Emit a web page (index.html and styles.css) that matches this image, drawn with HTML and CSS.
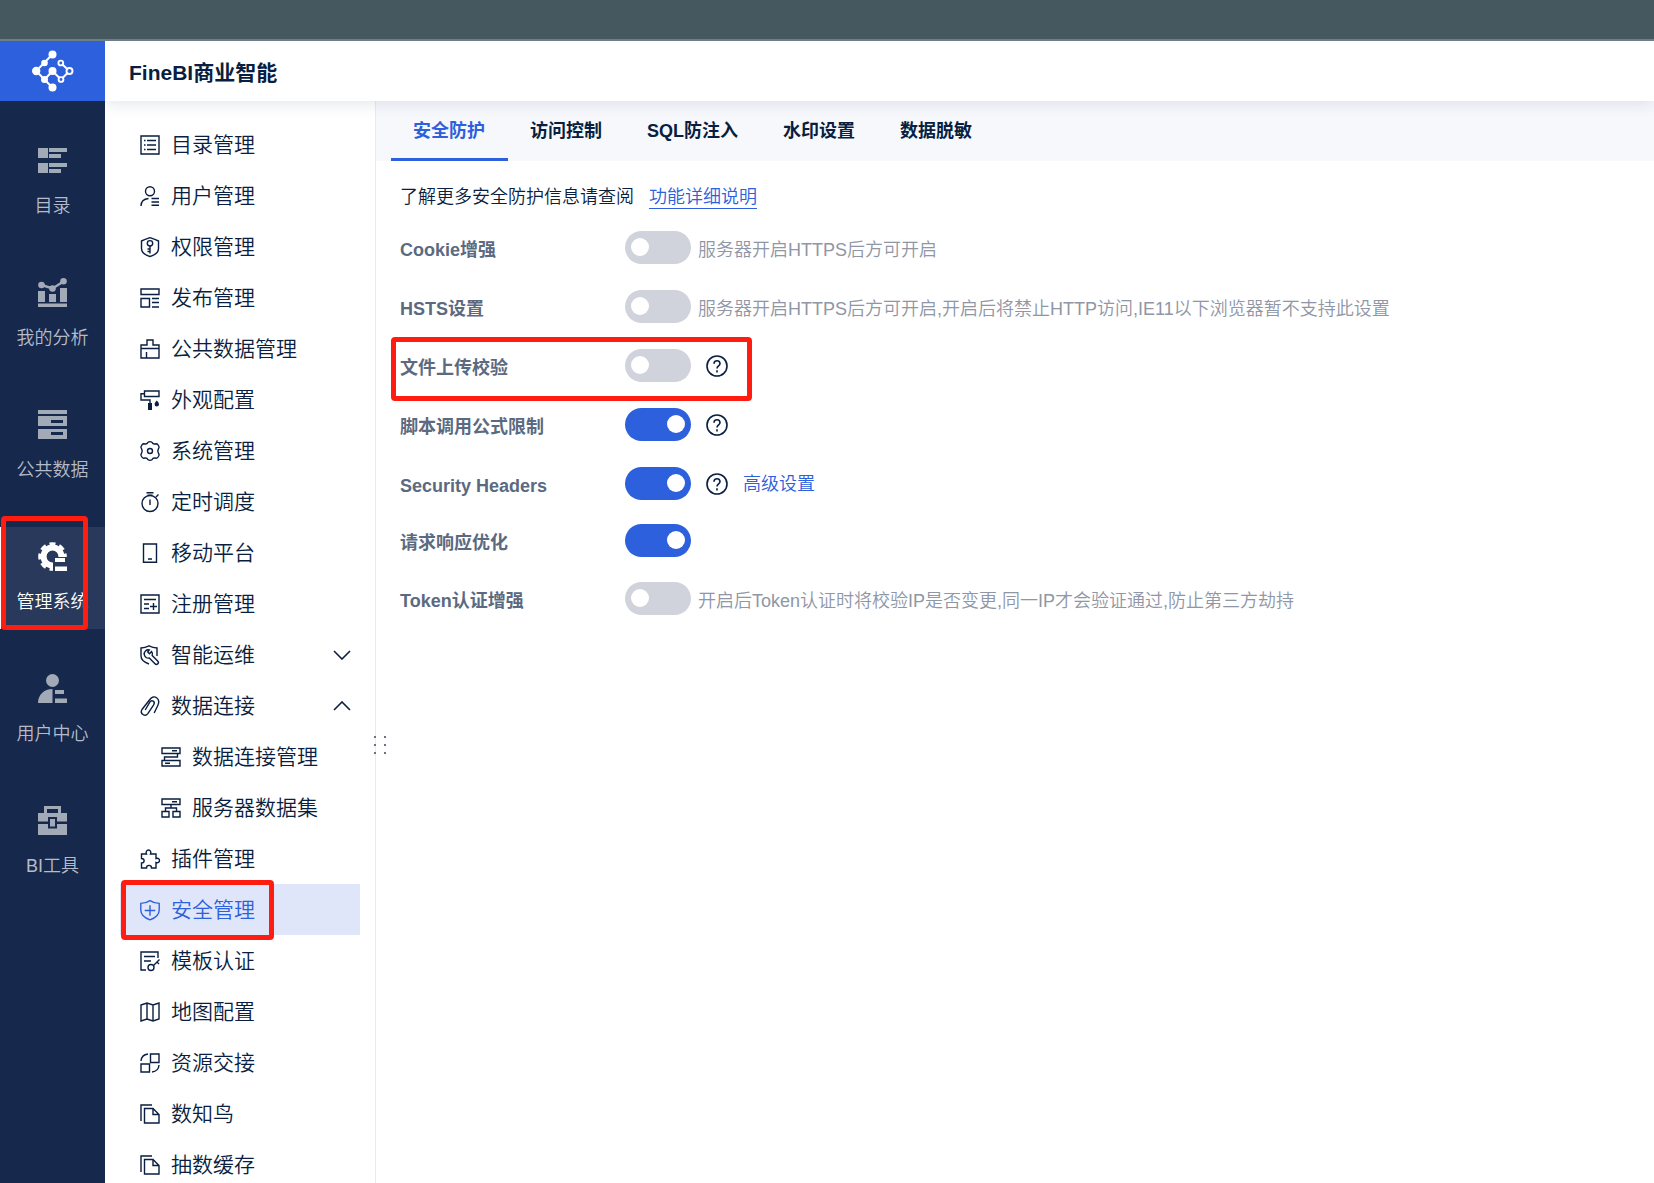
FILE: index.html
```html
<!DOCTYPE html>
<html lang="zh-CN">
<head>
<meta charset="utf-8">
<meta name="viewport" content="width=device-width, initial-scale=1">
<title>FineBI商业智能</title>
<link rel="stylesheet" href="styles.css">
</head>
<body>
<div class="window-bar"></div>
<div class="app">
  <div class="rail">
    <a class="logo" href="#" aria-label="FineBI">
      <svg width="42" height="42" viewBox="0 0 42 42">
        <path d="M20.500 4.300 4.200 21l16.300 16.700M12.500 29.500l8-8.500 8.500 8.500 8.500-8.500-8.700-8" fill="none" stroke="#fff" stroke-width="2"/>
        <g fill="#fff"><circle cx="20.500" cy="4.500" r="4"/><circle cx="12.500" cy="13" r="3.300"/><circle cx="4.200" cy="21" r="4.200"/><circle cx="12.500" cy="29.500" r="3.500"/><circle cx="20.500" cy="21" r="4"/><circle cx="20.500" cy="37.500" r="4"/></g>
        <g fill="#2c60dc" stroke="#fff" stroke-width="1.900"><circle cx="28.800" cy="13" r="2.400"/><circle cx="37.500" cy="21" r="3"/><circle cx="29" cy="29.500" r="2.400"/></g>
      </svg>
    </a>
    <nav class="rail-nav" aria-label="主导航">
      <a class="rail-item" href="#">
        <svg class="rail-icon" viewBox="0 0 29 29"><path d="M0 2h10v10H0zM11 2h18v4H11zM11 8h12v4H11zM0 17h10v10H0zM11 17h18v4H11zM11 23h12v4H11z"/></svg>
        <span>目录</span>
      </a>
      <a class="rail-item" href="#">
        <svg class="rail-icon" viewBox="0 0 29 29"><path d="M0 13h7v11H0zM11 16h7v8h-7zM22 10h7v14h-7zM0 25.500h29V29H0z"/><circle cx="3.500" cy="7" r="3.300"/><circle cx="14.500" cy="10.500" r="3.300"/><circle cx="25.500" cy="3.300" r="3.300"/><path d="m3.500 7 11 3.500 11-7" fill="none" stroke="currentColor" stroke-width="2.400"/></svg>
        <span>我的分析</span>
      </a>
      <a class="rail-item" href="#">
        <svg class="rail-icon" viewBox="0 0 29 29"><path fill-rule="evenodd" d="M0 0h29v4H0zM0 6h29v10H0zM13 10v3h12v-3zM0 19h29v10H0zM13 22v3h12v-3z"/></svg>
        <span>公共数据</span>
      </a>
      <a class="rail-item is-active" href="#" aria-current="page">
        <svg class="rail-icon" viewBox="0 0 29 29">
          <clipPath id="gear-cut"><path d="M0 0h29v15H15v14H0z"/></clipPath>
          <g clip-path="url(#gear-cut)" fill="none" stroke="currentColor"><circle cx="14.500" cy="14.500" r="8.900" stroke-width="6"/><circle cx="14.500" cy="14.500" r="12.600" stroke-width="3.400" pathLength="80" stroke-dasharray="6 4" stroke-dashoffset="3"/></g>
          <path d="M17 16h10v4H17zM17 24.500h12V29H17z"/>
        </svg>
        <span>管理系统</span>
        <i class="marker marker-rail"></i>
      </a>
      <a class="rail-item" href="#">
        <svg class="rail-icon" viewBox="0 0 29 29"><circle cx="14.500" cy="6.500" r="6.500"/><path d="M14.500 15v14H0c0-8 6-14 14.500-14zM17 16h9v4h-9zM17 24.500h12V29H17z"/></svg>
        <span>用户中心</span>
      </a>
      <a class="rail-item" href="#">
        <svg class="rail-icon" viewBox="0 0 29 29"><path fill-rule="evenodd" d="M6 0h17v7h6v8.500H19V11h-9v4.500H0V7h6zM9 3v4h11V3zM0 18h10v4.500h9V18h10v11H0zM12 13h5v7.500h-5z"/></svg>
        <span>BI工具</span>
      </a>
    </nav>
  </div>

  <div class="workspace">
    <header class="header"><h1 class="title">FineBI商业智能</h1></header>
    <div class="body">
      <div class="sidebar">
        <nav class="menu" aria-label="管理系统">
          <a class="menu-item" href="#"><svg class="icon" viewBox="0 0 20 20"><path d="M1 1h18v18H1zM7 5.500h9M7 10h9M7 14.500h9M4 5.500h1.500M4 10h1.500M4 14.500h1.500"/></svg>目录管理</a>
          <a class="menu-item" href="#"><svg class="icon" viewBox="0 0 20 20"><circle cx="10" cy="5.300" r="4.500"/><path d="M1 20c0-4 2.800-7 7.500-7.500M11.500 12.500H19M11.500 16H19M11.500 19.300H19"/></svg>用户管理</a>
          <a class="menu-item" href="#"><svg class="icon" viewBox="0 0 20 20"><path d="M10 .700c3 1 5.800 2 8.500 3.300v7.500c0 4-3.500 6.500-8.500 8-5-1.500-8.500-4-8.500-8V4C4.200 2.700 7 1.700 10 .700zM10 9v7.500M10 12H7.500M10 14.500H7.500"/><circle cx="10" cy="6.300" r="2.700"/></svg>权限管理</a>
          <a class="menu-item" href="#"><svg class="icon" viewBox="0 0 20 20"><path d="M1 1h18v5.500H1zM1 10.500h8.500V19H1zM12 10.500h7M12 14.500h7M12 19h7"/></svg>发布管理</a>
          <a class="menu-item" href="#"><svg class="icon" viewBox="0 0 20 20"><path d="M1 6h6V1h6v5h6v13H1zM1 9.500h18M6.500 13v6"/></svg>公共数据管理</a>
          <a class="menu-item" href="#"><svg class="icon" viewBox="0 0 20 20"><path d="M4.500 1H19v5.500H4.500zM4.500 3.700H1V10h9v3"/><path class="solid" d="M8 13h4v7H8zM16.800 10.500c1.300 1.500 2.200 2.600 2.200 3.700a2.200 2.200 0 0 1-4.400 0c0-1.100.9-2.200 2.200-3.700z"/></svg>外观配置</a>
          <a class="menu-item" href="#"><svg class="icon" viewBox="0 0 20 20"><path d="M7.800 1.500Q10-.200 12.200 1.500q.6 1.700 2.600 1.500l1.700-.2q1 .1 1.600 1.200l.9 1.800q.3 1-.6 2-1.300 2.200 0 4.400.9 1 .6 2l-.9 1.800q-.6 1.100-1.600 1.200l-1.700-.2q-2-.2-2.600 1.500-2.200 1.700-4.400 0-.6-1.700-2.600-1.500l-1.700.2q-1-.1-1.600-1.200L1 14.200q-.3-1 .6-2 1.300-2.200 0-4.400-.9-1-.6-2L1.900 4q.6-1.100 1.600-1.200l1.700.2q2 .2 2.600-1.500z"/><circle cx="10" cy="10" r="2.500"/></svg>系统管理</a>
          <a class="menu-item" href="#"><svg class="icon" viewBox="0 0 20 20"><circle cx="10" cy="11.500" r="8"/><path d="M6.500.800h7M7.500 3.300h5M10 7.500V13M16 5l2.500-2.500"/></svg>定时调度</a>
          <a class="menu-item" href="#"><svg class="icon" viewBox="0 0 20 20"><path d="M3.500 1h13v18.200h-13zM8 16h4"/></svg>移动平台</a>
          <a class="menu-item" href="#"><svg class="icon" viewBox="0 0 20 20"><path d="M1 1h18v18H1zM4 5.500h12M4 10h5M4 14.500h5M10 12.500h7M13.500 9v7"/></svg>注册管理</a>
          <a class="menu-item" href="#"><svg class="icon" viewBox="0 0 20 20"><path d="M9 19c-5-1.800-8-4-8-8V3C3.500 2.800 6.500 2 9 .800c2.500 1.200 5.500 2 8 2.200v8"/><path d="M9.300 5a4 4 0 0 0-5 4.700 4 4 0 0 0 5 3.300l5.700 5.700a1.700 1.700 0 0 0 2.900-2.500l-5.700-5.700a4 4 0 0 0-.7-4L9.500 8.800 7.700 7z"/></svg>智能运维<svg class="chevron" viewBox="0 0 18 10"><path d="m1 1 8 8 8-8"/></svg></a>
          <a class="menu-item" href="#"><svg class="icon" viewBox="0 0 20 20"><path d="m14.200 17 3.600-7.500C21 3 14-2.500 9.800 3.500L2 13.500C-.500 17.500 5 21.500 8 17.300l5.800-8.600c1.700-3-2-5.500-4-2.500L5.200 14"/></svg>数据连接<svg class="chevron" viewBox="0 0 18 10"><path d="m1 9 8-8 8 8"/></svg></a>
          <a class="menu-item is-nested" href="#"><svg class="icon" viewBox="0 0 20 20"><path d="M1 1h18v5.500H1zM1 13.500h18V19H1zM16.500 6.500V10h-13v3.500M11 3.800h5M4 16.300h5"/></svg>数据连接管理</a>
          <a class="menu-item is-nested" href="#"><svg class="icon" viewBox="0 0 20 20"><path d="M1 1h18v5.500H1zM1 13.500h7V19H1zM12 13.500h7V19h-7zM4.500 13.500V10h11v3.500M10 6.500V10M11 3.800h5"/></svg>服务器数据集</a>
          <a class="menu-item" href="#"><svg class="icon" viewBox="0 0 20 20"><path d="M1.500 5h5c-1-2 .2-4 2-4s3 2 2 4H16v4.500c2-.8 3.500.4 3.500 2s-1.500 2.800-3.500 2V19h-4.500c0-3.500-5-3.500-5 0h-5v-5c3.500 0 3.500-4.500 0-4.500z"/></svg>插件管理</a>
          <a class="menu-item is-active" href="#" aria-current="page"><svg class="icon" viewBox="0 0 20 20"><path d="M10 .700c3 2 6 2.700 9.200 2.700V10c0 5-4 8-9.200 9.800C4.800 18 .800 15 .800 10V3.400C4 3.400 7 2.700 10 .700zM4.700 10.500h10.600M10 5.200v10.600"/></svg>安全管理<i class="marker marker-menu"></i></a>
          <a class="menu-item" href="#"><svg class="icon" viewBox="0 0 20 20"><path d="M6 19H1V1h17v6M4 5.500h11M4 10h7M13.500 14.500 19.500 8.500M17 11l2 2"/><circle cx="11" cy="16.500" r="3"/></svg>模板认证</a>
          <a class="menu-item" href="#"><svg class="icon" viewBox="0 0 20 20"><path d="m1 3 6-2 6 2 6-2v16l-6 2-6-2-6 2zM7 1v16M13 3v16"/></svg>地图配置</a>
          <a class="menu-item" href="#"><svg class="icon" viewBox="0 0 20 20"><path d="M10.500 1H19v8.500h-8.500zM1 11h8.500v8H1zM1 8c.3-4 2.500-6.500 7-7M19 12c-.3 4-2.500 6.500-7 7"/></svg>资源交接</a>
          <a class="menu-item" href="#"><svg class="icon" viewBox="0 0 20 20"><path d="M1 17V1h11M4.500 4.500H13l6 6V19H4.500zM13 4.500v6h6"/></svg>数知鸟</a>
          <a class="menu-item" href="#"><svg class="icon" viewBox="0 0 20 20"><path d="M1 17V1h11M4.500 4.500H13l6 6V19H4.500zM13 4.500v6h6"/></svg>抽数缓存</a>
        </nav>
        <svg class="grip" width="12" height="18" viewBox="0 0 12 18"><path d="M0 0h2v2H0zM10 0h2v2h-2zM0 8h2v2H0zM10 8h2v2h-2zM0 16h2v2H0zM10 16h2v2h-2z"/></svg>
      </div>

      <main class="main">
        <div class="tabs" role="tablist">
          <button class="tab is-active" type="button" role="tab" aria-selected="true">安全防护</button>
          <button class="tab" type="button" role="tab">访问控制</button>
          <button class="tab" type="button" role="tab">SQL防注入</button>
          <button class="tab" type="button" role="tab">水印设置</button>
          <button class="tab" type="button" role="tab">数据脱敏</button>
        </div>
        <div class="panel">
          <p class="intro">了解更多安全防护信息请查阅<a class="doc-link" href="#">功能详细说明</a></p>
          <div class="settings">
            <div class="setting">
              <label class="name" for="cookie">Cookie增强</label>
              <input class="switch" id="cookie" type="checkbox" role="switch">
              <span class="note">服务器开启HTTPS后方可开启</span>
            </div>
            <div class="setting">
              <label class="name" for="hsts">HSTS设置</label>
              <input class="switch" id="hsts" type="checkbox" role="switch">
              <span class="note">服务器开启HTTPS后方可开启,开启后将禁止HTTP访问,IE11以下浏览器暂不支持此设置</span>
            </div>
            <div class="setting">
              <label class="name" for="upload">文件上传校验</label>
              <input class="switch" id="upload" type="checkbox" role="switch">
              <button class="help" type="button" aria-label="帮助"><svg width="22" height="22" viewBox="0 0 22 22"><circle cx="11" cy="11" r="10"/><path d="M8 8.800c0-4 6-4 6 0 0 2-3 2.200-3 4.700M11 15.200v2.200"/></svg></button>
              <i class="marker marker-setting"></i>
            </div>
            <div class="setting">
              <label class="name" for="script">脚本调用公式限制</label>
              <input class="switch" id="script" type="checkbox" role="switch" checked>
              <button class="help" type="button" aria-label="帮助"><svg width="22" height="22" viewBox="0 0 22 22"><circle cx="11" cy="11" r="10"/><path d="M8 8.800c0-4 6-4 6 0 0 2-3 2.200-3 4.700M11 15.200v2.200"/></svg></button>
            </div>
            <div class="setting">
              <label class="name" for="headers">Security Headers</label>
              <input class="switch" id="headers" type="checkbox" role="switch" checked>
              <button class="help" type="button" aria-label="帮助"><svg width="22" height="22" viewBox="0 0 22 22"><circle cx="11" cy="11" r="10"/><path d="M8 8.800c0-4 6-4 6 0 0 2-3 2.200-3 4.700M11 15.200v2.200"/></svg></button>
              <a class="advanced" href="#">高级设置</a>
            </div>
          </div>
          <div class="settings settings-compact">
            <div class="setting">
              <label class="name" for="response">请求响应优化</label>
              <input class="switch" id="response" type="checkbox" role="switch" checked>
            </div>
            <div class="setting">
              <label class="name" for="token">Token认证增强</label>
              <input class="switch" id="token" type="checkbox" role="switch">
              <span class="note">开启后Token认证时将校验IP是否变更,同一IP才会验证通过,防止第三方劫持</span>
            </div>
          </div>
        </div>
      </main>
    </div>
  </div>
</div>
</body>
</html>
```
FILE: styles.css
```css
:root {
  --blue: #2c60dc;
  --navy: #16284b;
  --ink: #091e40;
  --red: #ff1d12;
}

* { box-sizing: border-box; }

body {
  margin: 0;
  height: 100vh;
  display: flex;
  flex-direction: column;
  overflow: hidden;
  background: #fff;
  color: var(--ink);
  font: 350 18px/24px "Liberation Sans", "Noto Sans CJK SC", sans-serif;
}

a { color: inherit; text-decoration: none; }

button {
  padding: 0;
  border: 0;
  background: none;
  color: inherit;
  font: inherit;
}

.window-bar {
  flex: none;
  height: 41px;
  background: #45575f;
  border-bottom: 2px solid #6d7e85;
}

.app { flex: 1; min-height: 0; display: flex; }

/* Primary navigation rail */
.rail {
  flex: none;
  width: 105px;
  background: var(--navy);
}

.logo {
  height: 60px;
  display: flex;
  align-items: center;
  justify-content: center;
  background: var(--blue);
}

.rail-nav {
  display: flex;
  flex-direction: column;
  gap: 30px;
  padding-top: 30px;
}

.rail-item {
  position: relative;
  height: 102px;
  padding-top: 15px;
  display: flex;
  flex-direction: column;
  align-items: center;
  gap: 19px;
  color: #b5bcc9;
}

.rail-icon { width: 29px; height: 29px; fill: #a2a9b7; color: #a2a9b7; }

.rail-item.is-active {
  background: #28395b;
  box-shadow: inset 1px 0 #fff;
  color: #fff;
}

.rail-item.is-active .rail-icon { fill: #fff; color: #fff; }

/* Header */
.workspace { flex: 1; min-width: 0; display: flex; flex-direction: column; }

.header {
  position: relative;
  z-index: 1;
  flex: none;
  height: 60px;
  padding: 4px 24px 0;
  display: flex;
  align-items: center;
  background: #fff;
  box-shadow: 0 2px 16px rgba(9, 30, 64, 0.12);
  clip-path: inset(0 0 -24px 0);
}

.title { margin: 0; font-size: 21px; font-weight: 700; }

.body { flex: 1; min-height: 0; display: flex; }

/* Secondary menu */
.sidebar {
  position: relative;
  flex: none;
  width: 271px;
  border-right: 1px solid #e9ebee;
}

.menu { height: 100%; padding: 18px 15px 0; overflow: hidden; }

.menu-item {
  position: relative;
  height: 51px;
  padding: 0 9px 0 20px;
  display: flex;
  align-items: center;
  gap: 11px;
  font-size: 21px;
}

.menu-item.is-nested { padding-left: 41px; }

.menu-item.is-active { background: #e0e6fa; color: var(--blue); }

.icon {
  flex: none;
  width: 20px;
  height: 20px;
  overflow: visible;
  fill: none;
  stroke: currentColor;
  stroke-width: 1.4;
}

.icon .solid { fill: currentColor; stroke: none; }

.chevron {
  width: 18px;
  height: 10px;
  margin-left: auto;
  fill: none;
  stroke: currentColor;
  stroke-width: 1.6;
}

.grip { position: absolute; top: 635px; right: -11px; fill: #6b7484; }

/* Content */
.main { flex: 1; min-width: 0; }

.tabs { height: 60px; padding-left: 15px; display: flex; background: #f7f8fc; }

.tab {
  padding: 3px 23px 0 22px;
  border-bottom: 3px solid transparent;
  font-weight: 700;
}

.tab.is-active { color: var(--blue); border-color: var(--blue); }

.panel { padding: 24px; }

.intro { margin: 0 0 22px; display: flex; gap: 15px; }

.doc-link { height: 24px; color: var(--blue); border-bottom: 1px solid var(--blue); }

.settings { display: flex; flex-direction: column; gap: 26px; }

.settings-compact { margin-top: 24px; gap: 25px; }

.setting { position: relative; height: 33px; display: flex; align-items: center; }

.name {
  width: 225px;
  padding-top: 4px;
  color: #5b6a80;
  font-weight: 700;
}

.switch {
  appearance: none;
  width: 66px;
  height: 33px;
  margin: 0;
  padding: 7px 6px;
  display: flex;
  border-radius: 17px;
  background: #d0d3db;
}

.switch::before {
  content: "";
  width: 18px;
  height: 18px;
  border-radius: 50%;
  background: #fff;
}

.switch:checked { justify-content: flex-end; background: var(--blue); }

.note { padding: 4px 0 0 7px; color: #8f96a5; }

.help { width: 22px; height: 22px; margin-left: 15px; display: flex; }

.help svg { fill: none; stroke: currentColor; stroke-width: 1.6; }

.advanced { margin-left: 15px; color: var(--blue); }

/* Red callout frames drawn over the highlighted controls */
.marker {
  position: absolute;
  border: 5px solid var(--red);
  border-radius: 4px;
  pointer-events: none;
}

.marker-rail { left: 1px; top: -11px; width: 87px; height: 114px; }

.marker-menu { left: 1px; top: -4px; width: 153px; height: 60px; }

.marker-setting { left: -9px; top: -12px; width: 361px; height: 64px; }
```
